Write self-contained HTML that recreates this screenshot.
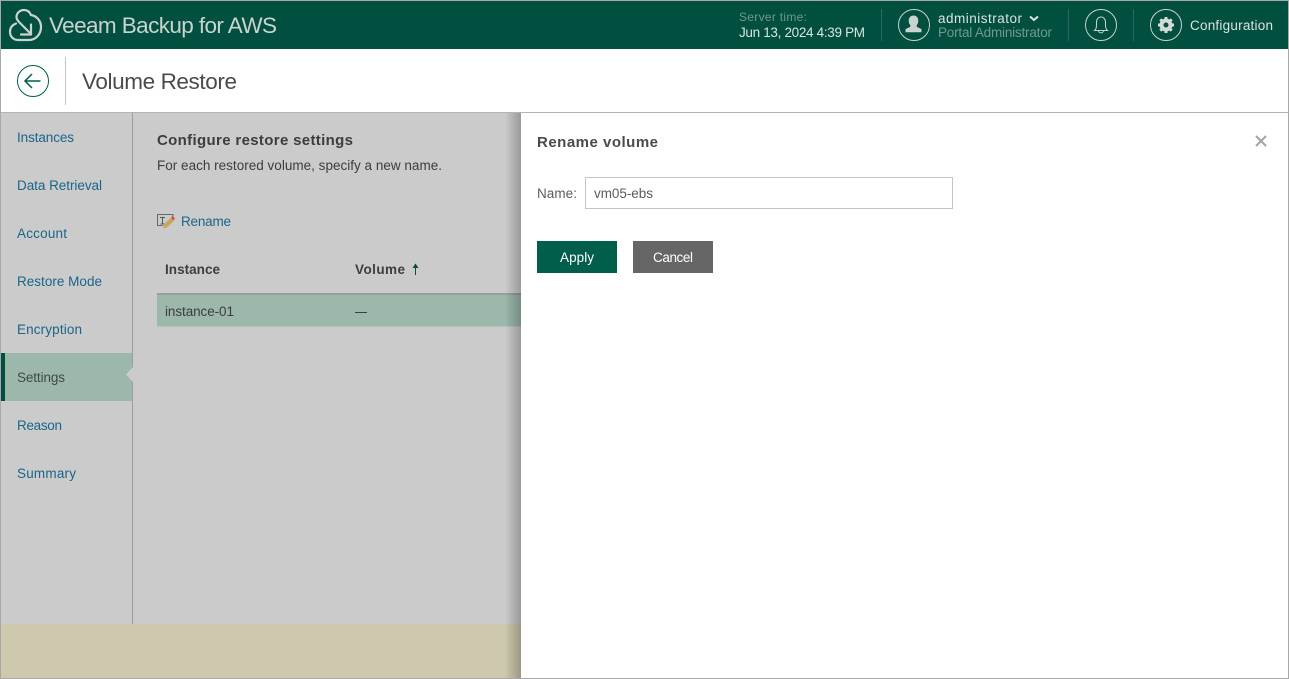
<!DOCTYPE html>
<html lang="en"><head><meta charset="utf-8"><title>Volume Restore</title>
<style>
html,body{margin:0;padding:0;width:1289px;height:679px;overflow:hidden;background:#fff}
svg{display:block}
text{font-family:"Liberation Sans",sans-serif;white-space:pre}
</style></head><body>
<svg width="1289" height="679" viewBox="0 0 1289 679" xmlns="http://www.w3.org/2000/svg">
<defs><linearGradient id="sh" x1="0" x2="1" y1="0" y2="0"><stop offset="0" stop-color="#000" stop-opacity="0"/><stop offset="1" stop-color="#000" stop-opacity=".24"/></linearGradient></defs>
<rect width="1289" height="679" fill="#fff"/>
<!-- header -->
<rect x="0" y="1" width="1289" height="48" fill="#004f3f"/>
<g fill="none" stroke="#c9d3cf" stroke-width="2.200" stroke-linecap="round" stroke-linejoin="round">
<path d="M31 15C29.500 11.500 27 10 24 10C19.500 10 16.500 13.500 16.500 17C16.500 19.500 18 21 19.500 22.500L31 34"/>
<path d="M31 15C37 16 41 21 41 27C41 34 36 40 29 40H18C13 40 10 36 10 32C10 28 12 25 16 23.500"/>
<path d="M31 24.500V34.500H21"/>
</g>
<text x="49" y="33" font-size="22.500" fill="#c9d3cf" textLength="228" lengthAdjust="spacing">Veeam Backup for AWS</text>
<text x="739" y="21" font-size="12" fill="#6f9a8d" textLength="68" lengthAdjust="spacing">Server time:</text>
<text x="739" y="37" font-size="13.500" fill="#dbe3e0" textLength="126" lengthAdjust="spacing">Jun 13, 2024 4:39 PM</text>
<rect x="881" y="9" width="1" height="32" fill="#2a6a5b"/>
<circle cx="914" cy="25" r="15.500" fill="none" stroke="#c9d3cf" stroke-width="1"/>
<path d="M913.500 15.500c3 0 4.800 2.300 4.800 5.300c0 2-.8 3.500-1.600 4.500v1.500l4.800 2.300v3.200h-16v-3.200l4.800-2.300v-1.500c-.8-1-1.600-2.500-1.600-4.500c0-3 1.800-5.300 4.800-5.300z" fill="#c9d3cf"/>
<text x="938" y="23" font-size="13.500" fill="#dbe3e0" textLength="84" lengthAdjust="spacing">administrator</text>
<path d="M1030 16.500l4 3.500l4-3.500" fill="none" stroke="#dbe3e0" stroke-width="2"/>
<text x="938" y="37" font-size="13.500" fill="#6f9a8d" textLength="114" lengthAdjust="spacing">Portal Administrator</text>
<rect x="1068" y="9" width="1" height="32" fill="#2a6a5b"/>
<circle cx="1101" cy="25" r="15.500" fill="none" stroke="#c9d3cf" stroke-width="1"/>
<path d="M1094.500 30.500c1.800-1.500 2-3 2-5v-3.500c0-3 2-5 4.500-5s4.500 2 4.500 5v3.500c0 2 .2 3.500 2 5zM1098.500 30.500c0 3.200 5 3.200 5 0" fill="none" stroke="#c9d3cf" stroke-width="1"/>
<rect x="1133" y="9" width="1" height="32" fill="#2a6a5b"/>
<circle cx="1166" cy="25" r="15.500" fill="none" stroke="#c9d3cf" stroke-width="1"/>
<circle cx="1166" cy="25" r="4.500" fill="none" stroke="#d4dad7" stroke-width="4"/>
<g stroke="#d4dad7" stroke-width="3" fill="none">
<path d="M1166 17v3M1166 30v3M1158 25h3M1171 25h3M1160.300 19.300l2.200 2.200M1169.500 28.500l2.200 2.200M1171.700 19.300l-2.200 2.200M1162.500 28.500l-2.200 2.200"/>
</g>
<text x="1190" y="30" font-size="13.500" fill="#dbe3e0" textLength="83" lengthAdjust="spacing">Configuration</text>
<!-- title bar -->
<circle cx="33" cy="81" r="15.500" fill="none" stroke="#005f4b" stroke-width="1"/>
<path d="M25.500 81h15M32 74l-7 7l7 7" fill="none" stroke="#005f4b" stroke-width="1.500"/>
<rect x="65" y="57" width="1" height="48" fill="#c4c4c4"/>
<text x="82" y="89" font-size="22.500" fill="#4a4a4a" textLength="155" lengthAdjust="spacing">Volume Restore</text>
<rect x="0" y="112" width="1289" height="1" fill="#b4b4b4"/>
<!-- dimmed background -->
<rect x="0" y="113" width="521" height="511" fill="#cbcbcb"/>
<rect x="0" y="624" width="521" height="55" fill="#cdc8ae"/>
<rect x="132" y="113" width="1" height="511" fill="#9d9d9d"/>
<!-- nav -->
<rect x="1" y="353" width="131" height="48" fill="#9bb8ab"/>
<rect x="1" y="353" width="4" height="48" fill="#004f3f"/>
<path d="M133 367l-7 7.500l7 7.500z" fill="#cbcbcb"/>
<g font-size="13.500" fill="#1a6589">
<text x="17" y="142" textLength="57" lengthAdjust="spacing">Instances</text>
<text x="17" y="190" textLength="85" lengthAdjust="spacing">Data Retrieval</text>
<text x="17" y="238" textLength="50" lengthAdjust="spacing">Account</text>
<text x="17" y="286" textLength="85" lengthAdjust="spacing">Restore Mode</text>
<text x="17" y="334" textLength="65" lengthAdjust="spacing">Encryption</text>
<text x="17" y="382" textLength="48" lengthAdjust="spacing" fill="#3f4a4a">Settings</text>
<text x="17" y="430" textLength="45" lengthAdjust="spacing">Reason</text>
<text x="17" y="478" textLength="59" lengthAdjust="spacing">Summary</text>
</g>
<!-- content -->
<text x="157" y="145" font-size="15" font-weight="bold" fill="#3d3d3d" textLength="196" lengthAdjust="spacing">Configure restore settings</text>
<text x="157" y="170" font-size="13.500" fill="#3d3d3d" textLength="285" lengthAdjust="spacing">For each restored volume, specify a new name.</text>
<!-- rename icon -->
<path d="M162.500 225.500h-5v-11h15.500v4" fill="none" stroke="#666" stroke-width="1"/>
<path d="M160 217.500h5M162.500 217.500v6.500M160.500 224h4" fill="none" stroke="#555" stroke-width="1"/>
<path d="M163 228.500l1-4l7-7l3 3l-7 7z" fill="#c9a55c"/>
<path d="M171 217.500l1.500-1.500l2.500 2.500l-1.500 2z" fill="#c8504f"/>
<text x="181" y="226" font-size="13.500" fill="#1a6589" textLength="50" lengthAdjust="spacing">Rename</text>
<text x="165" y="274" font-size="13.500" font-weight="bold" fill="#3d3d3d" textLength="55" lengthAdjust="spacing">Instance</text>
<text x="355" y="274" font-size="13.500" font-weight="bold" fill="#3d3d3d" textLength="50" lengthAdjust="spacing">Volume</text>
<path d="M415.500 275v-11" stroke="#004f3f" stroke-width="1" fill="none"/>
<path d="M412.500 268l3-4.500l3 4.500z" fill="#004f3f"/>
<rect x="157" y="293" width="364" height="2" fill="#9d9d9d"/>
<rect x="157" y="295" width="364" height="31" fill="#9bb8ab"/>
<rect x="157" y="326" width="364" height="1" fill="#bdbdbd"/>
<text x="165" y="316" font-size="13.500" fill="#3d3d3d" textLength="69" lengthAdjust="spacing">instance-01</text>
<rect x="355" y="312" width="12" height="1" fill="#3d3d3d"/>
<!-- shadow -->
<rect x="505" y="113" width="16" height="566" fill="url(#sh)"/>
<!-- panel -->
<rect x="521" y="113" width="768" height="566" fill="#fff"/>
<text x="537" y="147" font-size="15" font-weight="bold" fill="#4a4a4a" textLength="121" lengthAdjust="spacing">Rename volume</text>
<path d="M1256 136l10 10M1266 136l-10 10" stroke="#a3a3a3" stroke-width="2" fill="none"/>
<text x="537" y="198" font-size="13.500" fill="#5c5c5c" textLength="40" lengthAdjust="spacing">Name:</text>
<rect x="585.500" y="177.500" width="367" height="31" fill="#fff" stroke="#c4c4c4" stroke-width="1"/>
<text x="594" y="198" font-size="13.500" fill="#5c5c5c" textLength="59" lengthAdjust="spacing">vm05-ebs</text>
<rect x="537" y="241" width="80" height="32" fill="#005f4b"/>
<text x="560" y="262" font-size="13.500" fill="#fff" textLength="34" lengthAdjust="spacing">Apply</text>
<rect x="633" y="241" width="80" height="32" fill="#666"/>
<text x="653" y="262" font-size="13.500" fill="#fff" textLength="40" lengthAdjust="spacing">Cancel</text>
<!-- window border -->
<rect x="0.500" y="0.500" width="1288" height="678" fill="none" stroke="#a8a8a8" stroke-width="1"/>
</svg>
</body></html>
